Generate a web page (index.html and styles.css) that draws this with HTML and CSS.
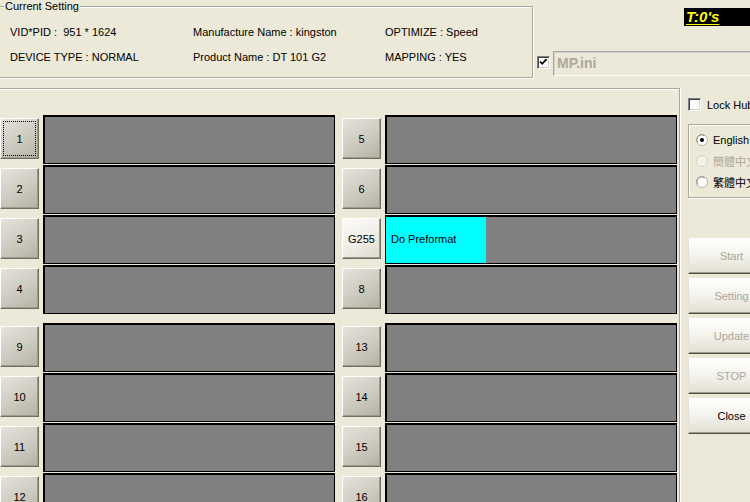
FILE: index.html
```html
<!DOCTYPE html>
<html>
<head>
<meta charset="utf-8">
<link rel="stylesheet" href="styles.css">
</head>
<body>
<div class="window">
  <header class="top">
    <section class="group current">
      <div class="legend">Current Setting</div>
      <div class="info">
        <span>VID*PID :&nbsp; 951 * 1624</span>
        <span>Manufacture Name : kingston</span>
        <span>OPTIMIZE : Speed</span>
        <span>DEVICE TYPE : NORMAL</span>
        <span>Product Name : DT 101 G2</span>
        <span>MAPPING : YES</span>
      </div>
    </section>
    <div class="top-right">
      <div class="timer">T:0's</div>
      <div class="ini-row">
        <span class="check"><svg width="11" height="11" viewBox="0 0 11 11"><polyline points="2,4.5 4.2,6.8 8.6,2.2" fill="none" stroke="#000" stroke-width="1.8"/></svg></span>
        <div class="ini-field">MP.ini</div>
      </div>
    </div>
  </header>
  <main class="main">
    <div class="ports">
      <div class="port-group">
        <div class="port-row">
          <div class="cell"><div class="pbtn focus">1</div><div class="status"></div></div>
          <div class="cell"><div class="pbtn">5</div><div class="status"></div></div>
        </div>
        <div class="port-row">
          <div class="cell"><div class="pbtn">2</div><div class="status"></div></div>
          <div class="cell"><div class="pbtn">6</div><div class="status"></div></div>
        </div>
        <div class="port-row">
          <div class="cell"><div class="pbtn">3</div><div class="status"></div></div>
          <div class="cell"><div class="pbtn light">G255</div><div class="status"><div class="progress">Do Preformat</div></div></div>
        </div>
        <div class="port-row">
          <div class="cell"><div class="pbtn">4</div><div class="status"></div></div>
          <div class="cell"><div class="pbtn">8</div><div class="status"></div></div>
        </div>
      </div>
      <div class="port-group second">
        <div class="port-row">
          <div class="cell"><div class="pbtn">9</div><div class="status"></div></div>
          <div class="cell"><div class="pbtn">13</div><div class="status"></div></div>
        </div>
        <div class="port-row">
          <div class="cell"><div class="pbtn">10</div><div class="status"></div></div>
          <div class="cell"><div class="pbtn">14</div><div class="status"></div></div>
        </div>
        <div class="port-row">
          <div class="cell"><div class="pbtn">11</div><div class="status"></div></div>
          <div class="cell"><div class="pbtn">15</div><div class="status"></div></div>
        </div>
        <div class="port-row">
          <div class="cell"><div class="pbtn">12</div><div class="status"></div></div>
          <div class="cell"><div class="pbtn">16</div><div class="status"></div></div>
        </div>
      </div>
    </div>
    <aside class="side">
      <label class="lock-row"><span class="check empty"></span><span>Lock Hub</span></label>
      <div class="group lang">
        <div class="radio-row">
          <svg class="radio" width="12" height="12" viewBox="0 0 12 12"><circle cx="6" cy="6" r="5.5" fill="#fff" stroke="#B8B5A6"/><path d="M1.6 8.5 A5 5 0 0 1 8.5 1.6" fill="none" stroke="#8A887C" stroke-width="1"/><circle cx="6" cy="6" r="2" fill="#000"/></svg>
          <span>English</span>
        </div>
        <div class="radio-row disabled">
          <svg class="radio" width="12" height="12" viewBox="0 0 12 12"><circle cx="6" cy="6" r="5.5" fill="#F3F1E8" stroke="#D6D3C6"/></svg>
          <span>簡體中文</span>
        </div>
        <div class="radio-row">
          <svg class="radio" width="12" height="12" viewBox="0 0 12 12"><circle cx="6" cy="6" r="5.5" fill="#fff" stroke="#B8B5A6"/><path d="M1.6 8.5 A5 5 0 0 1 8.5 1.6" fill="none" stroke="#8A887C" stroke-width="1"/></svg>
          <span>繁體中文</span>
        </div>
      </div>
      <div class="actions">
        <div class="sbtn disabled">Start</div>
        <div class="sbtn disabled">Setting</div>
        <div class="sbtn disabled">Update</div>
        <div class="sbtn disabled">STOP</div>
        <div class="sbtn">Close</div>
      </div>
    </aside>
  </main>
</div>
</body>
</html>
```

FILE: styles.css
```css
html, body {
  margin: 0;
  padding: 0;
}
body {
  background: #ECE9D8;
  width: 750px;
  height: 502px;
  overflow: hidden;
  font-family: "Liberation Sans", Arial, sans-serif;
  font-size: 11px;
  color: #000;
}
.window {
  width: 750px;
  height: 502px;
  display: flex;
  flex-direction: column;
}
.top {
  height: 88px;
  display: flex;
  flex: none;
}
.group {
  box-sizing: border-box;
  border: 1px solid #ACA899;
  box-shadow: inset 1px 1px 0 #fff, 1px 1px 0 #fff;
}
.current {
  margin: 6px 0 0 -3px;
  width: 536px;
  height: 72px;
}
.legend {
  display: block;
  width: max-content;
  margin: -7px 0 0 6px;
  padding: 0 1px;
  height: 13px;
  line-height: 13px;
  background: #ECE9D8;
}
.info {
  margin-top: 12px;
  padding-left: 12px;
  display: grid;
  grid-template-columns: 183px 192px auto;
  row-gap: 11px;
  line-height: 14px;
  white-space: nowrap;
}
.top-right {
  flex: 1;
  padding-left: 4px;
  display: flex;
  flex-direction: column;
  overflow: hidden;
}
.timer {
  margin: 8px 0 0 147px;
  height: 18px;
  width: 70px;
  background: #000;
  color: #FFFF00;
  font-weight: bold;
  font-style: italic;
  font-size: 15px;
  line-height: 18px;
  padding-left: 2px;
  text-decoration: underline;
  text-underline-offset: 2px;
}
.ini-row {
  margin-top: 25px;
  display: flex;
  align-items: flex-start;
}
.check {
  box-sizing: border-box;
  width: 13px;
  height: 13px;
  flex: none;
  background: #fff;
  border: 1px solid;
  border-color: #808080 #fff #fff #808080;
  box-shadow: inset 1px 1px 0 #404040, inset -1px -1px 0 #D4D0C8;
  display: flex;
  align-items: center;
  justify-content: center;
}
.check svg {
  display: block;
}
.ini-row .check {
  margin-top: 5px;
}
.ini-field {
  box-sizing: border-box;
  margin-left: 3px;
  flex: none;
  width: 210px;
  height: 25px;
  border: 1px solid;
  border-color: #A7A6AA #fff #fff #A7A6AA;
  box-shadow: inset 1px 1px 0 #D4D0C8;
  color: #ACA899;
  font-weight: bold;
  font-size: 14px;
  line-height: 23px;
  padding-left: 3px;
}
.main {
  flex: 1;
  display: flex;
  min-height: 0;
}
.ports {
  box-sizing: border-box;
  margin-left: -2px;
  width: 682px;
  flex: none;
  border-top: 1px solid #ACA899;
  border-right: 1px solid #ACA899;
  border-left: 1px solid #ACA899;
  box-shadow: inset 0 1px 0 #fff, 1px 0 0 #fff;
  padding: 26px 0 0 1px;
}
.port-group {
  display: flex;
  flex-direction: column;
  gap: 1px;
}
.port-group.second {
  margin-top: 9px;
}
.port-row {
  display: flex;
  gap: 7px;
  height: 49px;
}
.cell {
  display: flex;
  gap: 4px;
}
.pbtn {
  box-sizing: border-box;
  width: 39px;
  height: 41px;
  margin-top: 3px;
  border: 1px solid;
  border-color: #fff #716F64 #716F64 #fff;
  box-shadow: inset -1px -1px 0 #9D9A8C;
  background: linear-gradient(150deg, #E4E2DA 0%, #CFCCC2 50%, #B4B1A3 100%);
  display: flex;
  align-items: center;
  justify-content: center;
  font-size: 11px;
}
.pbtn.focus {
  outline: 1px dotted #000;
  outline-offset: -4px;
}
.pbtn.light {
  background: linear-gradient(150deg, #FBFBF9 0%, #F1EFE8 50%, #DCD9CE 100%);
}
.status {
  box-sizing: border-box;
  width: 292px;
  height: 49px;
  background: #808080;
  border: 1px solid #000;
  border-top-width: 2px;
  border-left-width: 2px;
  display: flex;
}
.progress {
  width: 100px;
  height: 100%;
  margin-left: -1px;
  background: #00FFFF;
  display: flex;
  align-items: center;
  padding: 0 0 2px 5px;
  box-sizing: border-box;
  white-space: nowrap;
}
.side {
  flex: 1;
  box-sizing: border-box;
  padding: 10px 0 0 8px;
  overflow: hidden;
  white-space: nowrap;
}
.lock-row {
  display: flex;
  align-items: center;
  gap: 6px;
  height: 13px;
}
.lang {
  margin-top: 13px;
  width: 80px;
  height: 74px;
  padding: 8px 0 0 7px;
  display: flex;
  flex-direction: column;
  gap: 7px;
}
.radio-row {
  display: flex;
  align-items: center;
  gap: 5px;
  height: 14px;
  font-family: "Liberation Sans", "Noto Sans CJK TC", sans-serif;
}
.radio-row.disabled {
  color: #ACA899;
}
.radio {
  display: block;
  flex: none;
}
.actions {
  margin-top: 40px;
  display: flex;
  flex-direction: column;
  gap: 4px;
}
.sbtn {
  box-sizing: border-box;
  width: 87px;
  height: 36px;
  border: 1px solid;
  border-color: #FDFDFB #A9A697 #4E4C45 #E4E2D8;
  box-shadow: inset 0 -1px 0 #9E9B8E;
  background: linear-gradient(180deg, #FFFFFF 0%, #F6F5F0 40%, #E2DFD3 100%);
  display: flex;
  align-items: center;
  justify-content: center;
}
.sbtn.disabled {
  color: #ACA899;
}
```
